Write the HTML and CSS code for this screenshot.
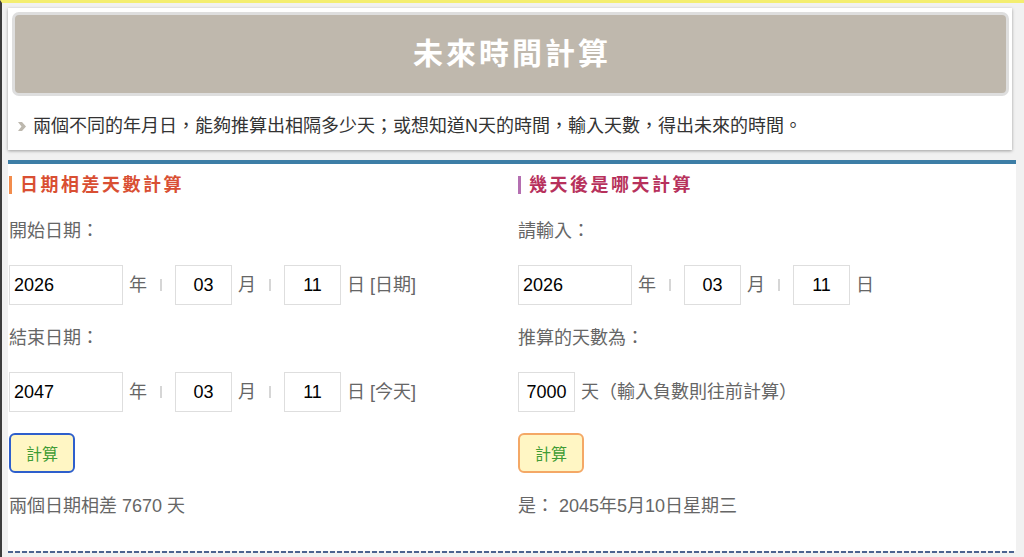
FILE: index.html
```html
<!DOCTYPE html>
<html lang="zh-Hant">
<head>
<meta charset="utf-8">
<title>未來時間計算</title>
<link rel="stylesheet" href="styles.css">
</head>
<body>
<div class="page">
  <div class="intro">
    <div class="banner"><h1 class="title">未來時間計算</h1></div>
    <p class="desc"><svg class="bullet" width="8" height="9" viewBox="0 0 8 9"><polygon points="0,0 4,0 8,4.5 4,9 0,9 3.5,4.5" fill="#bdb8ae"/></svg>兩個不同的年月日，能夠推算出相隔多少天；或想知道N天的時間，輸入天數，得出未來的時間。</p>
  </div>
  <div class="main">
    <section class="col">
      <h2 class="heading heading-diff">日期相差天數計算</h2>
      <div class="label">開始日期：</div>
      <div class="date-row">
        <input class="field field-year" value="2026">
        <span class="unit">年</span><span class="sep"></span>
        <input class="field field-md" value="03">
        <span class="unit">月</span><span class="sep"></span>
        <input class="field field-md" value="11">
        <span class="unit">日 [日期]</span>
      </div>
      <div class="label">結束日期：</div>
      <div class="date-row">
        <input class="field field-year" value="2047">
        <span class="unit">年</span><span class="sep"></span>
        <input class="field field-md" value="03">
        <span class="unit">月</span><span class="sep"></span>
        <input class="field field-md" value="11">
        <span class="unit">日 [今天]</span>
      </div>
      <button class="btn btn-blue">計算</button>
      <div class="result">兩個日期相差 7670 天</div>
    </section>
    <section class="col">
      <h2 class="heading heading-after">幾天後是哪天計算</h2>
      <div class="label">請輸入：</div>
      <div class="date-row">
        <input class="field field-year" value="2026">
        <span class="unit">年</span><span class="sep"></span>
        <input class="field field-md" value="03">
        <span class="unit">月</span><span class="sep"></span>
        <input class="field field-md" value="11">
        <span class="unit">日</span>
      </div>
      <div class="label">推算的天數為：</div>
      <div class="date-row">
        <input class="field field-days" value="7000">
        <span class="unit">天（輸入負數則往前計算）</span>
      </div>
      <button class="btn btn-orange">計算</button>
      <div class="result">是： 2045年5月10日星期三</div>
    </section>
  </div>
  <div class="dash"></div>
</div>
</body>
</html>
```

FILE: styles.css
```css
html, body {
  margin: 0;
  padding: 0;
}
body {
  background: #f1f1f1;
  border-top: 3px solid #f4ee70;
  border-left: 2px solid #3c3c3c;
  min-height: 100vh;
  box-sizing: border-box;
  font-family: "Liberation Sans", "Noto Sans CJK TC", sans-serif;
  color: #666;
}
.page {
  padding: 5px 8px 0 6px;
}
.intro {
  background: #fff;
  margin-right: 4px;
  padding: 4px 3px 0 4px;
  box-shadow: 0 1px 3px rgba(0, 0, 0, 0.35);
}
.banner {
  box-sizing: border-box;
  height: 84px;
  background: #bfb8ad;
  border: 3px solid #dedede;
  border-radius: 7px;
  display: flex;
  align-items: center;
  justify-content: center;
}
.title {
  margin: 0;
  color: #fff;
  font-size: 30px;
  font-weight: bold;
  letter-spacing: 3px;
  line-height: 36px;
  padding-left: 3px;
}
.desc {
  margin: 0;
  padding: 18px 0 12px 6px;
  font-size: 18px;
  line-height: 24px;
  color: #333;
  display: flex;
  align-items: center;
}
.bullet {
  margin-right: 7px;
  flex: none;
}
.main {
  margin-top: 10px;
  background: #fff;
  border-top: 4px solid #3d7ea6;
  padding: 12px 0 32px 1px;
  display: grid;
  grid-template-columns: 509px 1fr;
}
.col {
  display: flex;
  flex-direction: column;
  align-items: flex-start;
  gap: 21px;
}
.heading {
  margin: 0 0 4px 0;
  font-size: 18px;
  line-height: 18px;
  font-weight: bold;
  letter-spacing: 2.5px;
  padding-left: 8px;
  border-left: 3px solid;
}
.heading-diff {
  color: #d94f33;
  border-left-color: #f28c4c;
}
.heading-after {
  color: #b7315c;
  border-left-color: #b46fb1;
}
.label, .result {
  font-size: 18px;
  line-height: 25px;
  color: #666;
}
.date-row {
  display: flex;
  align-items: center;
  height: 40px;
}
.field {
  box-sizing: border-box;
  height: 40px;
  border: 1px solid #dedede;
  background: #fff;
  font-family: "Liberation Sans", "Noto Sans CJK TC", sans-serif;
  font-size: 18px;
  color: #000;
  margin: 0;
  outline: none;
}
.field-year {
  width: 114px;
  padding: 0 0 0 4px;
}
.field-md {
  width: 57px;
  padding: 0;
  text-align: center;
}
.field-days {
  width: 57px;
  padding: 0;
  text-align: center;
}
.unit {
  margin-left: 6px;
  font-size: 18px;
  line-height: 25px;
  color: #666;
  white-space: nowrap;
}
.sep {
  width: 2px;
  height: 12px;
  background: #d6d6d6;
  margin: 0 13px 0 13px;
}
.btn {
  box-sizing: border-box;
  width: 66px;
  height: 40px;
  border-radius: 6px;
  background: #fff6c4;
  color: #3f9c35;
  font-family: "Liberation Sans", "Noto Sans CJK TC", sans-serif;
  font-size: 16px;
  padding: 0;
  margin: 0;
  cursor: pointer;
}
.btn-blue {
  border: 2px solid #2e5fcc;
}
.btn-orange {
  border: 2px solid #f4a866;
}
.dash {
  height: 2px;
  background: repeating-linear-gradient(90deg, #4b6390 0 5px, transparent 5px 7px);
}
```
